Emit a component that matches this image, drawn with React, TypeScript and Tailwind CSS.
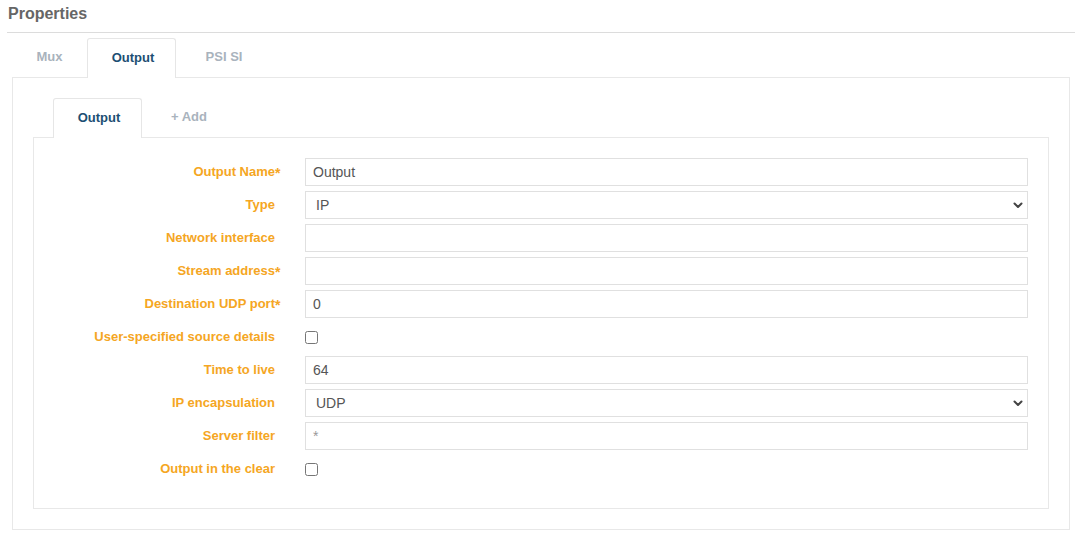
import React from "react";

type Field = {
  label: string;
  required?: boolean;
  kind: "text" | "select" | "checkbox";
  value?: string;
  placeholder?: string;
};

const fields: Field[] = [
  { label: "Output Name", required: true, kind: "text", value: "Output" },
  { label: "Type", kind: "select", value: "IP" },
  { label: "Network interface", kind: "text", value: "" },
  { label: "Stream address", required: true, kind: "text", value: "" },
  { label: "Destination UDP port", required: true, kind: "text", value: "0" },
  { label: "User-specified source details", kind: "checkbox" },
  { label: "Time to live", kind: "text", value: "64" },
  { label: "IP encapsulation", kind: "select", value: "UDP" },
  { label: "Server filter", kind: "text", value: "", placeholder: "*" },
  { label: "Output in the clear", kind: "checkbox" },
];

function Chevron() {
  return (
    <svg
      width="12"
      height="12"
      viewBox="0 0 12 12"
      className="pointer-events-none absolute right-[4px] top-1/2 -translate-y-1/2"
    >
      <path d="M2.5 4.5 L6 8 L9.5 4.5" fill="none" stroke="#444" strokeWidth="2" strokeLinecap="round" strokeLinejoin="round" />
    </svg>
  );
}

function FieldControl({ field }: { field: Field }) {
  if (field.kind === "checkbox") {
    return (
      <div className="flex h-[28px] items-center">
        <input type="checkbox" className="m-0 h-[13px] w-[13px]" />
      </div>
    );
  }
  if (field.kind === "select") {
    return (
      <div className="relative">
        <select
          defaultValue={field.value}
          className="h-[28px] w-full appearance-none border border-[#e0e0e0] bg-white pl-[10px] text-[14px] text-[#555] outline-none"
        >
          <option>{field.value}</option>
        </select>
        <Chevron />
      </div>
    );
  }
  return (
    <input
      type="text"
      defaultValue={field.value}
      placeholder={field.placeholder}
      className="h-[28px] w-full border border-[#e0e0e0] bg-white px-[7px] text-[14px] text-[#555] outline-none placeholder:text-[#999]"
    />
  );
}

function Tab({ label, active, width }: { label: string; active?: boolean; width: string }) {
  return (
    <div
      className={
        active
          ? `${width} -mb-px flex h-[40px] items-center justify-center rounded-t-[3px] border border-b-0 border-[#e6e6e6] bg-white pb-[2px] pl-[3px] text-[13px] font-bold text-[#1d4f73]`
          : `${width} flex h-[39px] items-center justify-center pb-[2px] text-[13px] font-bold text-[#a9b3bd]`
      }
    >
      {label}
    </div>
  );
}

export default function App() {
  return (
    <div className="min-h-[538px] bg-white pl-[7px] pr-[12px] pt-[4px] font-['Liberation_Sans',Arial,sans-serif]">
      <h2 className="border-b border-[#dcdcdc] pb-[8px] pl-px text-[16px] font-bold leading-[20px] text-[#666]">
        Properties
      </h2>

      <div className="mx-[5px] mt-[5px]">
        {/* Outer tabs */}
        <div className="relative z-10 flex items-end">
          <Tab label="Mux" width="w-[75px]" />
          <Tab label="Output" active width="w-[89px]" />
          <Tab label="PSI SI" width="w-[96px]" />
        </div>

        <div className="border border-[#e8e8e8] px-[20px] pb-[20px] pt-[20px]">
          {/* Inner tabs */}
          <div className="relative z-10 ml-[20px] flex items-end">
            <Tab label="Output" active width="w-[89px]" />
            <Tab label="+ Add" width="w-[94px]" />
          </div>

          <div className="border border-[#e8e8e8] pb-[25px] pl-0 pr-[20px] pt-[20px]">
            <div className="flex flex-col gap-[5px]">
              {fields.map((field) => (
                <div key={field.label} className="flex items-center">
                  <div className="relative -top-px w-[241px] shrink-0 text-right">
                    <span className="relative text-[13px] font-bold text-[#f5a623]">
                      {field.label}
                      {field.required && (
                        <span className="absolute left-full top-[-1px] text-[14px]">*</span>
                      )}
                    </span>
                  </div>
                  <div className="ml-[30px] flex-1">
                    <FieldControl field={field} />
                  </div>
                </div>
              ))}
            </div>
          </div>
        </div>
      </div>
    </div>
  );
}
